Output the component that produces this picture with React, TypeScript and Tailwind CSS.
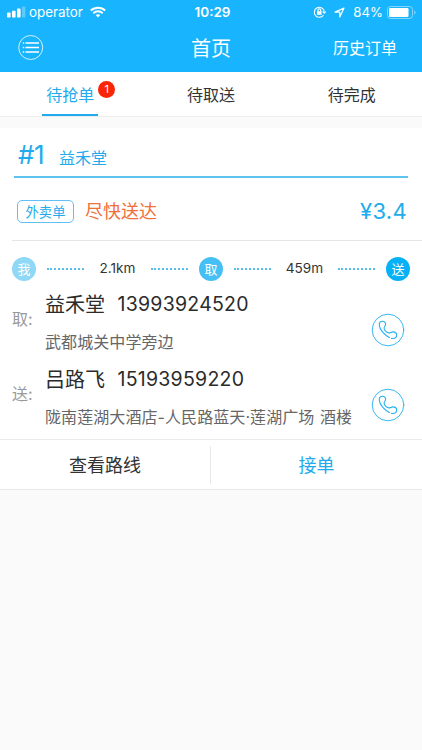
import React, { useState } from 'react';

const tabs = [
  { label: '待抢单', count: 1 },
  { label: '待取送', count: 0 },
  { label: '待完成', count: 0 },
];

const contacts = [
  { tag: '取:', name: '益禾堂', phone: '13993924520', address: '武都城关中学旁边' },
  { tag: '送:', name: '吕路飞', phone: '15193959220', address: '陇南莲湖大酒店-人民路蓝天·莲湖广场 酒楼' },
];

const StatusBar: React.FC = () => (
  <div className="h-6 grid grid-cols-[1fr_auto_1fr] items-center text-[13px] leading-6">
    <div className="flex items-center pl-[7px]">
      <svg width="19" height="12" viewBox="0 0 19 12" fill="currentColor">
        <rect x="0" y="6.5" width="3.6" height="5" rx="0.8" />
        <rect x="5" y="4.8" width="3.6" height="6.7" rx="0.8" />
        <rect x="10" y="2.6" width="3.6" height="8.9" rx="0.8" />
        <rect x="15" y="0.5" width="3.4" height="11" rx="0.8" opacity="0.3" />
      </svg>
      <span className="ml-[3px] text-[13.4px]">operator</span>
      <svg className="ml-[7px]" width="16" height="12" viewBox="0 0 16 12" fill="none" stroke="currentColor" strokeWidth="2">
        <path d="M0.8 4.5C4.8 0.7 11.2 0.7 15.2 4.5" />
        <path d="M3.3 7.2C6 4.7 10 4.7 12.7 7.2" />
        <path d="M8 11.4L5.7 9.1C7 7.9 9 7.9 10.3 9.1Z" fill="currentColor" stroke="none" />
      </svg>
    </div>
    <span className="ml-[3px] font-semibold text-[13.5px]">10:29</span>
    <div className="flex items-center justify-end pr-[6px]">
      <svg width="14" height="12" viewBox="0 0 14 12" fill="none" stroke="currentColor" strokeWidth="1.1">
        <path d="M10.4 9.2A5 5 0 1 1 11.2 5" />
        <path d="M9 5.4H13.4L11.2 8Z" fill="currentColor" stroke="none" />
        <rect x="4" y="5.2" width="4.6" height="3.6" fill="currentColor" stroke="none" />
        <path d="M4.9 5.6V4.3A1.4 1.4 0 0 1 7.7 4.3V5.6" />
      </svg>
      <svg className="ml-[7px]" width="11" height="11" viewBox="0 0 11 11" fill="none" stroke="currentColor" strokeWidth="1.2" strokeLinejoin="round">
        <path d="M10 1L1 5.1H5.8V10Z" />
      </svg>
      <span className="ml-[8px] text-[13.2px]">84%</span>
      <svg className="ml-[4px]" width="29" height="13" viewBox="0 0 29 13" fill="none">
        <rect x="0.5" y="0.5" width="25" height="12" rx="3" stroke="currentColor" opacity="0.45" />
        <rect x="2" y="2" width="19.5" height="9" rx="1.2" fill="currentColor" />
        <path d="M27.3 4.3C29 5 29 8 27.3 8.7Z" fill="currentColor" opacity="0.5" />
      </svg>
    </div>
  </div>
);

const MenuIcon: React.FC = () => (
  <svg width="26" height="26" viewBox="0 0 26 26" fill="none" stroke="currentColor">
    <circle cx="12.7" cy="12.5" r="12" strokeWidth="0.8" />
    <path d="M7.5 8H21M7.5 12.5H21M7.5 17H21" strokeWidth="1.3" />
    <path d="M4.8 8H6.2M4.8 12.5H6.2M4.8 17H6.2" strokeWidth="1.3" />
  </svg>
);

const PhoneIcon: React.FC = () => (
  <svg width="34" height="34" viewBox="0 0 34 34" fill="none" stroke="#22b0f0" strokeLinecap="round" strokeLinejoin="round">
    <circle cx="17" cy="17" r="15.8" strokeWidth="0.9" />
    <path
      d="M18.4 24.5C14.3 22.6 8.4 17 8.3 11.9C8.2 9.6 9.4 8.2 11.3 8.2C13.4 8.2 14.7 9.7 14.6 11.5C14.5 13.1 13 13.6 13.1 15.2C13.3 17.3 15.9 19.9 17.9 19.9C19.5 19.9 20.3 18.8 22 18.9C24.1 19 25.7 20.3 25.7 22.1C25.7 24.2 23.8 25.5 21.6 25.5L20.5 25.4"
      strokeWidth="1.1"
    />
  </svg>
);

const Dots: React.FC = () => <span className="w-[37px] border-t-2 border-dotted border-[#55c0ec]" />;

const App: React.FC = () => {
  const [active, setActive] = useState(0);

  return (
    <div className="min-h-screen bg-[#fafafa] font-[Inter,'Noto_Sans_CJK_SC',sans-serif] font-normal text-[#333]">
      <header className="h-[72px] bg-[#18b4fe] text-white">
        <StatusBar />
        <div className="h-12 grid grid-cols-[1fr_auto_1fr] items-center pl-[18px] pr-[25px]">
          <button className="justify-self-start"><MenuIcon /></button>
          <h1 className="text-xl ml-[7px] pt-0.5">首页</h1>
          <button className="justify-self-end text-base">历史订单</button>
        </div>
      </header>

      <nav className="h-[45px] grid grid-cols-3 bg-white border-b border-[#eee]">
        {tabs.map((tab, i) => (
          <button key={tab.label} onClick={() => setActive(i)} className="flex justify-center">
            <span
              className={
                i === active
                  ? 'relative h-11 px-1 leading-[47px] text-[#22abec] border-b-2 border-[#22abec]'
                  : 'relative h-11 px-1 leading-[47px]'
              }
            >
              {tab.label}
              {tab.count > 0 && (
                <span className="absolute left-[56px] top-[9px] size-[17px] rounded-full bg-[#fa2406] text-white text-[11px] leading-[17px] text-center">
                  {tab.count}
                </span>
              )}
            </span>
          </button>
        ))}
      </nav>

      <section className="mt-[11px] h-[362px] bg-white border-b border-[#e8e8e8] flex flex-col">
        <div className="mx-[14px] h-[50px] flex items-baseline pl-1 pt-1.5 text-[#22abec] border-b-2 border-[#5cc4ef]">
          <span className="w-[29px] text-[26px] leading-[42px] tracking-[-0.5px]">#1</span>
          <span className="ml-3 text-base">益禾堂</span>
        </div>

        <div className="ml-3 h-[63px] border-b border-[#e5e5e5] flex items-center pl-[5px] pr-[15px] pt-[5px]">
          <span className="w-[57px] h-[23px] rounded-[5px] border border-[#62bff5] text-center text-[13.3px] leading-[22px] text-[#22abec]">
            外卖单
          </span>
          <span className="ml-[11px] text-lg text-[#f0703a]">尽快送达</span>
          <span className="ml-auto text-[22px] tracking-[0.3px] text-[#22abec]">¥3.4</span>
        </div>

        <div className="h-[55px] px-3 flex items-center justify-between text-[13px] text-[#333]">
          <span className="size-6 rounded-full bg-[#8fd8f6] text-white text-center leading-6">我</span>
          <Dots />
          <span className="w-[44px] text-center text-[13.6px]">2.1km</span>
          <Dots />
          <span className="size-6 rounded-full bg-[#46c0f4] text-white text-center leading-6">取</span>
          <Dots />
          <span className="w-[44px] text-center text-[13.6px]">459m</span>
          <Dots />
          <span className="size-6 rounded-full bg-[#06b1f5] text-white text-center leading-6">送</span>
        </div>

        {contacts.map((c) => (
          <div key={c.phone} className="h-[75px] pl-3 pr-[17px] flex">
            <span className="w-[33px] pt-[11px] text-base text-[#999]">{c.tag}</span>
            <div className="flex-1 whitespace-nowrap">
              <p className="flex items-center h-[18px] text-xl text-[#2b2b2b]">
                {c.name}
                <span className="ml-[12.5px] text-[19.5px] tracking-[0.25px]">{c.phone}</span>
              </p>
              <p className="mt-4 text-base leading-6 text-[#666] tracking-[0.08px] [word-spacing:1px]">{c.address}</p>
            </div>
            <button className="self-start mt-[17px]"><PhoneIcon /></button>
          </div>
        ))}

        <div className="-mt-[7px] flex-1 grid grid-cols-2 items-center border-t border-[#eaeaea] text-lg">
          <button className="h-[38px] pt-[3px] border-r border-[#e8e8e8]">查看路线</button>
          <button className="h-[38px] pt-[3px] text-[#22abec]">接单</button>
        </div>
      </section>
    </div>
  );
};

export default App;
